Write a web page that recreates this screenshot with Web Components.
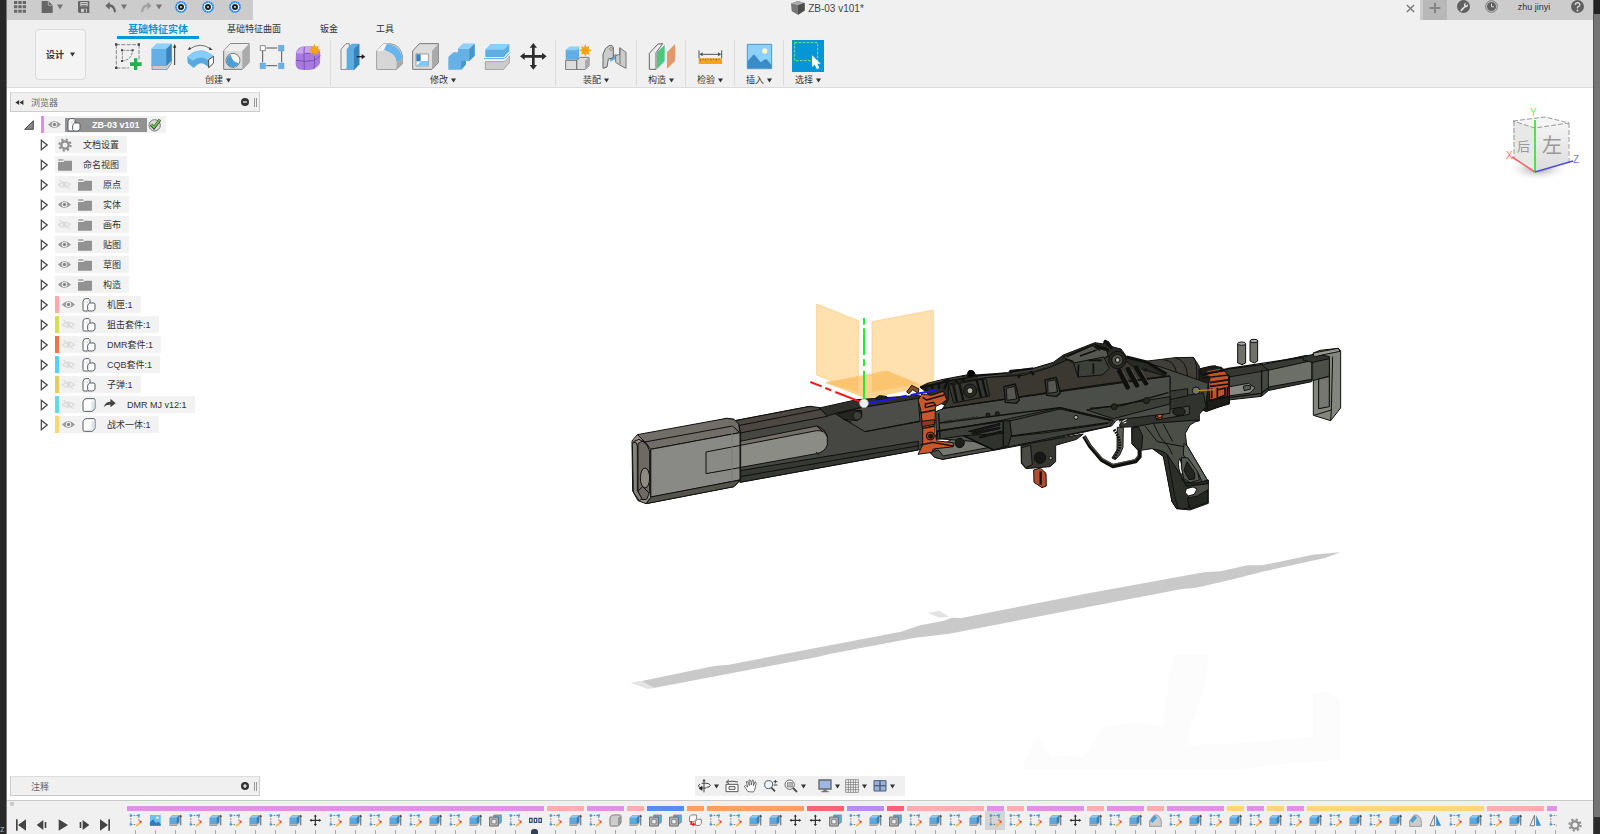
<!DOCTYPE html>
<html lang="zh-CN">
<head>
<meta charset="utf-8">
<title>ZB-03 v101*</title>
<style>
    html, body { height: 100%; }
    body {
        margin: 0;
        overflow: hidden;
        font-family: "Liberation Sans", "Noto Sans CJK SC", sans-serif;
        font-size: 9px;
        color: #333;
        background: #282828;
    }
</style>
</head>
<body>
<cad-app></cad-app>

<script>
const BASE = `
    *, :host { box-sizing: border-box; }
    button {
        display: flex; align-items: center; justify-content: center;
        margin: 0; padding: 0; border: 0; background: none;
        font: inherit; color: inherit; cursor: pointer;
    }
`;

const SUN = (x, y) => `<g transform="translate(${x} ${y})"><path fill="#f7a30c" d="M0-19L4-9 12-14 10-4 19 0 10 4 13 13 4 10 0 19-4 10-13 13-10 4-19 0-10-4-13-13-4-9Z"/></g>`;
const SKETCH = `<g fill="none" stroke="#555" stroke-width="2.5" stroke-dasharray="5 4"><path d="M6 5H31M6 5V33M6 34H22M32 8V22"/></g>
    <g fill="#3d9fe8"><path d="M2 1h7v7H2zM28 1h7v7h-7zM2 30h7v7H2z"/></g>
    <path d="M23 36L34 25 39 30 28 39 21 41Z" fill="#f6b73c"/><path d="M33 24L37 20 42 25 38 30Z" fill="#f04438"/>`;
const EXTRUDE = `<path d="M2 12L12 3H34L33 30 25 39H2Z" fill="#777"/><path d="M3 12L12 4H33V27L25 33H3Z" fill="#59a9e0"/><path d="M3 12L12 4H33L25 12Z" fill="#8ccdf7"/><path d="M25 12L33 4V27L25 33Z" fill="#3382bd"/><path d="M3 33H25L33 28V31L25 37H3Z" fill="#ccc"/><path d="M38 37V6" stroke="#333" stroke-width="2.5"/><path d="M34 9L38 2 42 9Z" fill="#333"/>`;
const COMBINE = `<path d="M15 3H40V27L30 34H15Z" fill="#5dabdf" stroke="#4b7d9e" stroke-width="2"/><path d="M2 10H30V39H2Z" fill="#bbb" stroke="#666" stroke-width="3"/><path d="M9 17H23V32H9Z" fill="#f0f0f0" stroke="#777" stroke-width="3"/>`;
const MOVE = `<path d="M40 0L51 14H44V36H66V29L80 40 66 51V44H44V66H51L40 80 29 66H36V44H14V51L0 40 14 29V36H36V14H29Z" fill="#2d2d2d"/>`;
const FILLET = `<path d="M2 40V22L15 5Q18 2 25 3Q38 8 40 26V40Z" fill="#ccc" stroke="#777" stroke-width="2"/><path d="M4 22L17 5 27 11 11 29Z" fill="#4c9cd6"/>`;
const COMP = `<g fill="#fff" stroke="#555b66" stroke-width="3"><path d="M3 10Q4 3 10 2H21Q25 4 24 9V33Q22 39 16 39H6Q2 39 3 34Z"/><path d="M17 23Q18 17 23 15H36Q40 17 39 21V33Q37 39 31 39H21Q17 38 17 34Z"/></g><path d="M5 12H15Q20 10 22 5M15 12V20" fill="none" stroke="#ccd0d6" stroke-width="2"/>`;
const GEAR = c => `<g fill="none" stroke="${c}"><circle cx="21" cy="21" r="11" stroke-width="7"/><circle cx="21" cy="21" r="17" stroke-width="6" stroke-dasharray="6.5 6.85"/></g>`;

// name: [viewBox, markup]
const ICONS = {
    apps: ['0 0 36 36', `<g fill="#666"><path d="M0 0h10v9H0zM13 0h10v9H13zM26 0h10v9H26zM0 13h10v9H0zM13 13h10v9H13zM26 13h10v9H26zM0 26h10v9H0zM13 26h10v9H13zM26 26h10v9H26z"/></g>`],
    file: ['0 0 36 36', `<path d="M2 0H22L35 13V36H2Z" fill="#666"/><path d="M22 0V13H35" fill="none" stroke="#ccc" stroke-width="2"/>`],
    save: ['0 0 36 36', `<path fill="#666" d="M2 0H34V36H4L0 32V2Z"/><path fill="#ccc" d="M7 3H29V16H7ZM9 23H27V34H9Z"/><path fill="#666" d="M10 7H26V9H10ZM10 12H26V14H10ZM18 25h6v9h-6z"/>`],
    undo: ['0 0 36 36', `<path d="M1 14L14 2V10Q31 10 33 34H27Q25 18 14 18V26Z" fill="#666"/>`],
    redo: ['0 0 36 36', `<path d="M35 14L22 2V10Q5 10 3 34H9Q11 18 22 18V26Z" fill="#a2a2a2"/>`],
    ring: ['0 0 36 36', `<circle cx="18" cy="18" r="15" fill="#e9f5ff" stroke="#1687ff" stroke-width="5" stroke-dasharray="6 1"/><circle cx="18" cy="18" r="9" fill="#222"/><circle cx="18" cy="18" r="3" fill="#ddd"/>`],
    caret: ['0 0 10 10', `<path d="M0 1H10L5 9Z" fill="currentColor"/>`],
    cubedoc: ['0 0 40 40', `<path d="M0 7L20 0 39 6V27L20 39 2 29Z" fill="#777"/><path d="M0 7L20 0 39 6 20 12Z" fill="#aaa"/><path d="M20 12L39 6V27L20 39Z" fill="#4d4d4d"/>`],
    close: ['0 0 10 10', `<path d="M1 1L9 9M9 1L1 9" stroke="#777" stroke-width="1.5"/>`],
    plus: ['0 0 36 36', `<path d="M18 2V34M2 18H34" stroke="#858585" stroke-width="6"/>`],
    wrench: ['0 0 40 40', `<circle cx="20" cy="20" r="20" fill="#606060"/><path d="M10 31L22 19Q19 10 29 8L25 14 28 17 34 12Q35 23 25 23L14 35Z" fill="#ddd"/>`],
    clock: ['0 0 40 40', `<circle cx="20" cy="20" r="18" fill="none" stroke="#777" stroke-width="3"/><circle cx="20" cy="20" r="14" fill="#606060"/><path d="M20 11V21H28" stroke="#ddd" stroke-width="3" fill="none"/>`],
    help: ['0 0 40 40', `<circle cx="20" cy="20" r="20" fill="#606060"/><path d="M13 15Q14 8 20 8Q28 9 27 16Q26 20 20 22V26" stroke="#ddd" stroke-width="4" fill="none"/><circle cx="20" cy="32" r="3" fill="#ddd"/>`],

    newsketch: ['0 0 81 81', `<g fill="none" stroke="#555" stroke-width="2"><path d="M3 5H72M4 5V74M72 5V50M4 75H42" stroke-dasharray="12 4"/><path d="M22 22H52Q52 50 22 54Z" stroke-dasharray="9 3"/></g><g fill="#444"><path d="M0 1h7v7H0zM68 1h7v7h-7zM0 71h7v7H0zM18 19h6v6h-6zM50 19h6v6h-6zM18 51h6v6h-6z"/></g><path d="M57 46H67V58H80V69H67V81H57V69H45V58H57Z" fill="#22b14c"/>`],
    extrude: ['0 0 81 81', `<path d="M3 66H45L61 50V61L48 80H3Z" fill="#ccc" stroke="#777" stroke-width="2"/><path d="M1 18L17 2H62V52L46 69H1Z" fill="#62b0e6"/><path d="M1 18L17 2H62L46 18Z" fill="#8dd0fb"/><path d="M46 18L62 2V52L46 69Z" fill="#3784bb"/><path d="M71 66V10" stroke="#333" stroke-width="3"/><path d="M66 14L71 2 76 14Z" fill="#333"/>`],
    revolve: ['0 0 81 81', `<path d="M8 18Q40-4 70 17" fill="none" stroke="#333" stroke-width="2"/><path d="M2 21L8 11 12 19ZM77 21L68 12 66 20Z" fill="#333"/><path d="M1 41Q40 4 80 40L68 48V74Q60 70 56 66Q40 52 20 75L2 60Z" fill="#5aa9de"/><path d="M1 41Q40 8 80 40L64 52Q42 34 17 53Z" fill="#86cdf9"/><path d="M65 50L80 40V60L65 74Z" fill="#fff" stroke="#444" stroke-width="3"/>`],
    hole: ['0 0 81 81', `<path d="M2 24L22 2H78V58L58 79H2Z" fill="#ddd" stroke="#777" stroke-width="3"/><path d="M3 24L22 3H77L58 24Z" fill="#eee"/><path d="M58 24L78 3V57L58 78Z" fill="#aaa"/><circle cx="30" cy="52" r="21" fill="#f4f4f4" stroke="#777" stroke-width="3"/><path d="M23 35A19 19 0 1 0 47 60Q28 58 23 35Z" fill="#4c9dd6"/>`],
    pattern: ['0 0 81 81', `<path d="M22 15H54M11 24V58M68 24V58M22 68H54" stroke="#555" stroke-width="3"/><path d="M4 8h15v15H4z" fill="#fff" stroke="#555" stroke-width="2"/><path d="M58 7h17v17H58zM3 60h17v17H3zM58 60h17v17H58z" fill="#68b4ea" stroke="#4a96c9"/>`],
    form: ['0 0 81 81', `<path d="M3 30Q4 20 17 12Q24 9 55 10Q72 14 76 30L75 60Q71 70 55 79Q30 84 10 78Q1 72 2 58Z" fill="#a77bde"/><path d="M3 30Q10 18 20 12Q45 7 60 14L55 28Q25 34 3 30Z" fill="#c9a6f3"/><path d="M28 12Q26 22 28 80M3 52Q30 58 58 52L76 38M58 28Q60 50 57 78M28 31H57" fill="none" stroke="#7b4fb8" stroke-width="3"/>${SUN(59, 21)}`],
    presspull: ['0 0 81 81', `<path d="M3 19L18 2H28V64L18 80H3Z" fill="#eee" stroke="#555" stroke-width="2"/><path d="M20 18L35 2H58V64L42 81H20Z" fill="#5dabdf"/><path d="M42 18L58 2V64L42 81Z" fill="#3583bb"/><path d="M50 41H68" stroke="#222" stroke-width="4"/><path d="M65 33L76 41 65 49Z" fill="#222"/>`],
    fillet: ['0 0 81 81', `<path d="M2 79V24L22 2H42Q75 5 80 42V62L61 80Z" fill="#d6d6d6" stroke="#777" stroke-width="2"/><path d="M2 24L22 2H40L24 24Z" fill="#f4f4f4"/><path d="M32 3Q70 5 80 46L62 58Q60 30 24 21Z" fill="#67b5ec"/><path d="M4 26L24 21Q58 30 61 58V78H4Z" fill="#d6d6d6"/><path d="M62 58L80 46V62L61 80Z" fill="#aaa"/>`],
    shell: ['0 0 81 81', `<path d="M2 24L22 2H80V58L60 79H2Z" fill="#ddd" stroke="#777" stroke-width="3"/><path d="M60 24L79 3V57L60 78Z" fill="#aaa"/><path d="M12 33H49V69H12Z" fill="#fff" stroke="#777" stroke-width="2"/><path d="M13 34H26V55H13Z" fill="#3784bb"/><path d="M14 68L27 54H48V68Z" fill="#7dc8f7"/>`],
    combine: ['0 0 81 81', `<path d="M1 42L16 28H30V18L45 2H80V38L64 54H54V64L40 80H1Z" fill="#65b0e4"/><path d="M30 18L45 2H80L64 18Z" fill="#90d2fc"/><path d="M64 18L80 2V38L64 54ZM40 54H54V64L40 80Z" fill="#4c95cb"/>`],
    split: ['0 0 81 81', `<path d="M4 20L21 3H76V25L60 43H4Z" fill="#5eaee2"/><path d="M4 20L21 3H76L60 20Z" fill="#8bd0fb"/><path d="M4 56H60L76 38V59L58 80H4Z" fill="#ccc" stroke="#888" stroke-width="2"/><path d="M2 47H62L79 28" fill="none" stroke="#fff" stroke-width="8"/><path d="M0 47H61L79 28" fill="none" stroke="#4aa5e1" stroke-width="3"/>`],
    move: ['0 0 81 81', MOVE],
    assemble: ['0 0 81 81', `<path d="M2 22L14 11H42V50H2Z" fill="#60aee4"/><path d="M2 22L14 11H46L35 22Z" fill="#8dd1fc"/><path d="M2 52H35V80H2ZM35 52L46 43H72V68L60 80H35Z" fill="#ddd" stroke="#777" stroke-width="3"/><path d="M60 53L72 43V68L60 80Z" fill="#aaa"/>${SUN(61, 22)}`],
    joint: ['0 0 81 81', `<path d="M25 42L45 32 52 44 28 56Z" fill="#61b0e7"/><path d="M6 76V34Q12 12 24 8Q36 5 37 15V44L22 48 18 72Z" fill="#ccc" stroke="#666" stroke-width="3"/><path d="M44 38L56 34V14L75 28V76L56 66 44 58Z" fill="#ccc" stroke="#777" stroke-width="3"/><path d="M57 15V64" stroke="#777" stroke-width="3"/><circle cx="30" cy="18" r="4" fill="#fff" stroke="#555" stroke-width="2"/>`],
    construct: ['0 0 81 81', `<path d="M4 31L30 3 44 2 24 29V79H4Z" fill="#eee" stroke="#666" stroke-width="3"/><path d="M27 28L50 5V54L27 78Z" fill="#4fc57d"/><path d="M57 28L81 3V54L57 77Z" fill="#e59768"/>`],
    measure: ['0 0 81 81', `<path d="M6 22V46M74 22V46M12 34H68" stroke="#555" stroke-width="3"/><path d="M7 34L17 28V40ZM73 34L63 28V40Z" fill="#555"/><path d="M5 46H75V63H5Z" fill="#f9a31a"/><path d="M10 46V54M18 46V51M26 46V54M34 46V51M42 46V54M50 46V51M58 46V54M66 46V51" stroke="#835b19" stroke-width="2"/>`],
    picture: ['0 0 81 81', `<path d="M4 4H77V77H4Z" fill="#8bd1fb" stroke="#4d98ce" stroke-width="3"/><circle cx="56" cy="24" r="8" fill="#fff8c2"/><path d="M5 55L21 36Q24 34 28 38L44 58 55 50Q61 46 65 52L76 66V76H5Z" fill="#398cc5"/>`],
    select: ['0 0 96 96', `<path d="M0 0H96V96H0Z" fill="#0696d7"/><path d="M8 8H77V62H8Z" fill="none" stroke="#7fe08c" stroke-width="3" stroke-dasharray="8 4"/><path d="M60 46V81L68 74 75 88 82 84 76 71H86Z" fill="#fff"/>`],

    sketch: ['0 0 42 42', SKETCH], ext: ['0 0 42 42', EXTRUDE], comb: ['0 0 42 42', COMBINE], cham: ['0 0 42 42', FILLET],
    mv: ['-4 -4 90 90', MOVE],
    img: ['0 0 42 42', `<path d="M3 3H38V38H3Z" fill="#72c0f2"/><path d="M3 27L13 17 23 29 30 24 38 32V38H3Z" fill="#277fbd"/><circle cx="27" cy="12" r="4" fill="#fff3b1"/>`],
    dots: ['0 0 42 42', `<g fill="#fff" stroke="#334d7a" stroke-width="4"><path d="M2 14h8v13H2zM17 14h8v13H17zM32 14h8v13H32z"/></g>`],
    body: ['0 0 42 42', `<path d="M3 13Q5 4 14 3H35Q39 4 39 8V28Q34 38 28 39H6Q2 38 3 34Z" fill="#ccc" stroke="#666" stroke-width="2.5"/><path d="M29 13L39 5V28L29 38Z" fill="#999"/>`],
    insert: ['0 0 42 42', `<g fill="#fff" stroke="#777" stroke-width="3"><path d="M2 8L9 3H24V16L16 25H2Z"/><path d="M21 23L28 17H40V30L34 37H21Z"/></g><path d="M7 23V33H14" fill="none" stroke="#d22" stroke-width="5"/><path d="M12 27L21 33 12 40Z" fill="#e11"/>`],
    mirror: ['0 0 42 42', `<path d="M18 4V38H3Z" fill="#eee" stroke="#777" stroke-width="3"/><path d="M23 4V38H39Z" fill="#3c91cd"/>`],

    first: ['0 0 36 36', `<path d="M3 1h5v34H3zM33 1V35L9 18Z" fill="#444"/>`],
    prev: ['0 0 36 36', `<path d="M22 3V33L2 18ZM26 9h5v18h-5z" fill="#444"/>`],
    play: ['0 0 36 36', `<path d="M5 1L33 18 5 35Z" fill="#444"/>`],
    next: ['0 0 36 36', `<path d="M14 3V33L34 18ZM5 9h5v18H5z" fill="#444"/>`],
    last: ['0 0 36 36', `<path d="M28 1h5v34h-5zM3 1V35L27 18Z" fill="#444"/>`],
    gear: ['0 0 42 42', GEAR('#8f8f8f')],

    eye: ['0 0 42 42', `<path d="M0 21Q20-2 42 21Q20 44 0 21Z" fill="#999"/><circle cx="21" cy="21" r="9" fill="#eee"/><circle cx="21" cy="21" r="5.5" fill="#888"/>`],
    eyeoff: ['0 0 42 42', `<path d="M2 22Q20 5 40 21Q20 38 2 22ZM5 6L36 35" fill="none" stroke="#dadada" stroke-width="4"/><circle cx="21" cy="21" r="6" fill="#dadada"/>`],
    folder: ['0 0 42 42', `<path d="M0 12H16L20 8H42V38H0Z" fill="#929292"/><path d="M1 4H16V8H1Z" fill="#929292"/>`],
    comp: ['0 0 42 42', COMP],
    cube: ['0 0 42 42', `<path d="M3 11Q6 3 12 2H36Q40 3 39 8V31Q36 37 30 40H7Q2 40 3 35Z" fill="#fff" stroke="#555b66" stroke-width="3"/><path d="M5 12H28V38L38 31V7L28 12Z" fill="#dfe3ea"/>`],
    link: ['0 0 42 42', `<path d="M2 32Q8 15 24 15V6L41 20 24 33V25Q11 24 2 32Z" fill="#444"/>`],
    check: ['0 0 42 42', `<circle cx="20" cy="22" r="17" fill="#ddd" stroke="#777" stroke-width="3"/><path d="M9 20L18 29 36 5" fill="none" stroke="#333" stroke-width="9"/><path d="M9 19L18 28 36 5" fill="none" stroke="#6ec04b" stroke-width="6"/>`],
    tri: ['0 0 30 40', `<path d="M6 4V36L26 20Z" fill="#f4f4f4" stroke="#444" stroke-width="4"/>`],
    open: ['0 0 30 30', `<path d="M28 2V28H2Z" fill="#888" stroke="#333" stroke-width="2.5"/>`],
    rewind: ['0 0 30 18', `<path d="M14 1V17L1 9ZM28 1V17L15 9Z" fill="#333"/>`],
    minus: ['0 0 24 24', `<circle cx="12" cy="12" r="12" fill="#333"/><path d="M6 12H18" stroke="#fff" stroke-width="3.5"/>`],
    add: ['0 0 24 24', `<circle cx="12" cy="12" r="12" fill="#333"/><path d="M6 12H18M12 6V18" stroke="#fff" stroke-width="3.5"/>`],

    orbit: ['0 0 42 42', `<path d="M21 2V40" stroke="#444" stroke-width="3"/><path d="M16 7L21 0 26 7Z" fill="#444"/><path d="M9 15Q-2 22 13 27H28M14 13Q40 11 40 20Q38 25 29 25" fill="none" stroke="#444" stroke-width="3"/><path d="M16 20L5 28 16 36Z" fill="#222"/>`],
    look: ['0 0 42 42', `<path d="M3 16H39V38H3ZM12 23H30V31H12Z" fill="#fff" stroke="#555" stroke-width="3"/><path d="M5 9Q20 4 39 9M12 2L4 9 12 14" fill="none" stroke="#555" stroke-width="3"/>`],
    pan: ['0 0 42 42', `<path d="M12 38Q5 28 1 22Q5 17 11 24L7 8Q12 4 16 20L15 3Q21 0 22 18L25 3Q31 2 28 20L34 8Q39 10 34 24Q33 35 28 39Z" fill="#fff" stroke="#555" stroke-width="2.5"/>`],
    zoom: ['0 0 42 42', `<circle cx="14" cy="17" r="12" fill="#eef6fb" stroke="#555" stroke-width="3"/><path d="M22 26L33 37" stroke="#444" stroke-width="5"/><path d="M34 3V13M29 8H40M29 18H40" stroke="#444" stroke-width="3"/>`],
    fit: ['0 0 42 42', `<circle cx="17" cy="17" r="14" fill="#fff" stroke="#666" stroke-width="3"/><path d="M10 11H25V24H10Z" fill="#bbb" stroke="#666" stroke-width="2"/><path d="M27 27L39 39" stroke="#555" stroke-width="6"/>`],
    display: ['0 0 42 42', `<path d="M3 3H39V30H3Z" fill="#9bb9e4" stroke="#666" stroke-width="4"/><path d="M16 30H26V36H32V40H10V36H16Z" fill="#777"/>`],
    grid: ['0 0 42 42', `<path d="M2 2H40V40H2ZM10 2V40M17 2V40M25 2V40M32 2V40M2 10H40M2 17H40M2 25H40M2 32H40" fill="#fff" stroke="#666" stroke-width="2"/>`],
    views: ['0 0 42 42', `<path d="M3 5H39V36H3Z" fill="#9ab3db" stroke="#4a5a77" stroke-width="3"/><path d="M21 5V36M3 20H39" stroke="#4a5a77" stroke-width="4"/>`]
};

class CadIcon extends HTMLElement {
    constructor() {
        super();
        this.attachShadow({ mode: 'open' });
    }

    connectedCallback() {
        const [box, art] = ICONS[this.getAttribute('name')];
        const size = this.getAttribute('size') || 14;
        this.shadowRoot.innerHTML = `
            <style>
                :host { display: inline-flex; flex: none; width: ${size}px; height: ${size}px; }
                svg { width: 100%; height: 100%; }
            </style>
            <svg viewBox="${box}" aria-hidden="true">${art}</svg>
        `;
    }
}
customElements.define('cad-icon', CadIcon);

const icon = (name, size) => `<cad-icon name="${name}" size="${size}"></cad-icon>`;

class TitleBar extends HTMLElement {
    constructor() {
        super();
        this.attachShadow({ mode: 'open' });
        this.shadowRoot.innerHTML = `
            <style>
                ${BASE}
                :host { display: flex; height: 20px; background: #f0f0f0; }
                .quick, .account { display: flex; align-items: flex-start; background: #ccc; }
                button { height: 13px; color: #777; }
                .quick { width: 246px; padding-left: 7px; }
                .quick button { flex: none; margin-right: 15px; gap: 4px; }
                .quick .menu { margin-right: 13px; }
                .tab { flex: 1; display: flex; align-items: center; gap: 4px; height: 16px; padding-right: 5px; font-size: 10px; color: #444; }
                .doc { flex: 1; display: flex; justify-content: center; align-items: center; gap: 3px; }
                .account { width: 173px; padding-left: 3px; }
                .account button { width: 28px; }
                .account .new { width: 24px; height: 20px; padding-bottom: 4px; background: #b8b8b8; margin-right: 2px; }
                .account .name { width: 58px; height: 14px; color: #333; }
            </style>
            <div class="quick">
                <button aria-label="应用">${icon('apps', 12)}</button>
                <button aria-label="文件">${icon('file', 12)}${icon('caret', 6)}</button>
                <button aria-label="保存">${icon('save', 12)}</button>
                <button aria-label="撤消" class="menu">${icon('undo', 12)}${icon('caret', 6)}</button>
                <button aria-label="重做" class="menu">${icon('redo', 12)}${icon('caret', 6)}</button>
                <button aria-label="插件 1">${icon('ring', 12)}</button>
                <button aria-label="插件 2">${icon('ring', 12)}</button>
                <button aria-label="插件 3">${icon('ring', 12)}</button>
            </div>
            <div class="tab">
                <div class="doc">${icon('cubedoc', 14)}<span>ZB-03 v101*</span></div>
                <button aria-label="关闭">${icon('close', 9)}</button>
            </div>
            <div class="account">
                <button aria-label="新建" class="new">${icon('plus', 12)}</button>
                <button aria-label="扩展">${icon('wrench', 13)}</button>
                <button aria-label="作业状态">${icon('clock', 13)}</button>
                <button class="name">zhu jinyi</button>
                <button aria-label="帮助">${icon('help', 13)}</button>
            </div>
        `;
    }
}
customElements.define('title-bar', TitleBar);

class ToolGroup extends HTMLElement {
    constructor() {
        super();
        this.attachShadow({ mode: 'open' });
    }

    connectedCallback() {
        const tools = this.dataset.tools.split(' ');
        this.shadowRoot.innerHTML = `
            <style>
                ${BASE}
                :host {
                    display: flex; flex-direction: column; align-items: center; gap: 2px;
                    padding: 0 ${tools.length > 1 ? 4 : 6}px; border-right: 1px solid #dcdcdc;
                }
                :host(:last-of-type) { border-right: 0; }
                .tools { display: flex; }
                .tools button { width: 36px; height: 32px; }
                .label { height: 12px; gap: 3px; line-height: 12px; }
            </style>
            <div class="tools">
                ${tools.map(t => `<button aria-label="${t}">${icon(t, t === 'select' ? 32 : 27)}</button>`).join('')}
            </div>
            <button class="label"><slot></slot>${icon('caret', 5)}</button>
        `;
    }
}
customElements.define('tool-group', ToolGroup);

class ToolRibbon extends HTMLElement {
    constructor() {
        super();
        this.attachShadow({ mode: 'open' });
        this.shadowRoot.innerHTML = `
            <style>
                ${BASE}
                :host { display: flex; height: 68px; background: #f0f0f0; border-bottom: 1px solid #dcdcdc; }
                .space {
                    width: 51px; height: 51px; margin: 9px 20px 0 28px; gap: 6px;
                    border: 1px solid #dadada; border-radius: 4px; background: #f4f4f4; font-weight: bold;
                }
                nav { display: flex; height: 20px; padding: 1px 0 0 11px; }
                nav button { height: 18px; border-bottom: 3px solid transparent; }
                nav .on { width: 82px; color: #0696d7; font-size: 10px; font-weight: bold; border-color: #0696d7; }
                nav .face { width: 110px; }
                nav .metal { width: 40px; }
                nav .tools { width: 72px; }
                .groups { display: flex; height: 46px; }
            </style>
            <button class="space">设计${icon('caret', 5)}</button>
            <div>
                <nav>
                    <button class="on">基础特征实体</button>
                    <button class="face">基础特征曲面</button>
                    <button class="metal">钣金</button>
                    <button class="tools">工具</button>
                </nav>
                <div class="groups">
                    <tool-group data-tools="newsketch extrude revolve hole pattern form">创建</tool-group>
                    <tool-group data-tools="presspull fillet shell combine split move">修改</tool-group>
                    <tool-group data-tools="assemble joint">装配</tool-group>
                    <tool-group data-tools="construct">构造</tool-group>
                    <tool-group data-tools="measure">检验</tool-group>
                    <tool-group data-tools="picture">插入</tool-group>
                    <tool-group data-tools="select">选择</tool-group>
                </div>
            </div>
        `;
    }
}
customElements.define('tool-ribbon', ToolRibbon);

class PanelBar extends HTMLElement {
    constructor() {
        super();
        this.attachShadow({ mode: 'open' });
    }

    connectedCallback() {
        const back = this.hasAttribute('back');
        this.shadowRoot.innerHTML = `
            <style>
                ${BASE}
                :host {
                    display: flex; align-items: center; width: 250px; height: 20px; padding: 0 2px 0 4px;
                    background: #f0f0f0; border: 1px solid #ccc; border-top-color: #ddd; color: #666;
                }
                .lead { width: 10px; margin-right: 6px; }
                .title { flex: 1; }
                .grip { width: 3px; height: 9px; margin-left: 5px; border: solid #999; border-width: 0 1px; }
            </style>
            <span class="lead">${back ? `<button aria-label="折叠">${icon('rewind', 9)}</button>` : ''}</span>
            <span class="title"><slot></slot></span>
            <button aria-label="切换">${icon(back ? 'minus' : 'add', 8)}</button>
            <span class="grip"></span>
        `;
    }
}
customElements.define('panel-bar', PanelBar);

class TreeRow extends HTMLElement {
    constructor() {
        super();
        this.attachShadow({ mode: 'open' });
    }

    connectedCallback() {
        const { kind, bar, eye, link } = this.dataset;
        const root = this.hasAttribute('root');
        this.shadowRoot.innerHTML = `
            <style>
                ${BASE}
                :host { display: flex; align-items: center; height: 17px; padding-left: 29px; }
                :host([root]) { padding-left: 14px; }
                .twist { width: 10px; margin-right: 6px; }
                :host([root]) .twist { margin-right: 7px; }
                .body { display: flex; align-items: center; height: 17px; padding-right: 8px; background: #f2f2f2; }
                .bar { width: 4px; height: 17px; background: ${bar}; }
                :host([root]) .bar { width: 3px; }
                .eye { margin: 0 0 0 3px; width: 13px; }
                .item { display: flex; align-items: center; height: 17px; padding-left: 7px; gap: 11px; color: #333; }
                .item.solo { padding-left: 3px; }
                :host([root]) .body { padding-right: 4px; gap: 1px; }
                :host([root]) .item { height: 14px; margin-left: 3px; padding: 0 7px 0 2px; background: #929292; color: #fff; font-weight: bold; }
                .link { margin: 0 0 0 -4px; }
            </style>
            <button class="twist" aria-label="展开">${icon(root ? 'open' : 'tri', root ? 10 : 12)}</button>
            <div class="body">
                ${bar ? '<span class="bar"></span>' : ''}
                ${eye ? `<button class="eye" aria-label="可见性">${icon(eye === 'on' ? 'eye' : 'eyeoff', 13)}</button>` : ''}
                <span class="item ${eye ? '' : 'solo'}">${icon(kind, 14)}${link ? `<span class="link">${icon('link', 13)}</span>` : ''}<slot></slot></span>
                ${root ? icon('check', 14) : ''}
            </div>
        `;
    }
}
customElements.define('tree-row', TreeRow);

class BrowserTree extends HTMLElement {
    constructor() {
        super();
        this.attachShadow({ mode: 'open' });
        this.shadowRoot.innerHTML = `
            <style>
                :host { display: block; }
                .rows { display: flex; flex-direction: column; gap: 3px; padding-top: 4px; }
            </style>
            <panel-bar back>浏览器</panel-bar>
            <div class="rows">
                <tree-row root data-kind="comp" data-bar="#dd8ee8" data-eye="on">ZB-03 v101</tree-row>
                <tree-row data-kind="gear">文档设置</tree-row>
                <tree-row data-kind="folder">命名视图</tree-row>
                <tree-row data-kind="folder" data-eye="off">原点</tree-row>
                <tree-row data-kind="folder" data-eye="on">实体</tree-row>
                <tree-row data-kind="folder" data-eye="off">画布</tree-row>
                <tree-row data-kind="folder" data-eye="on">贴图</tree-row>
                <tree-row data-kind="folder" data-eye="on">草图</tree-row>
                <tree-row data-kind="folder" data-eye="on">构造</tree-row>
                <tree-row data-kind="comp" data-bar="#ffa9ae" data-eye="on">机匣:1</tree-row>
                <tree-row data-kind="comp" data-bar="#d7dd51" data-eye="off">狙击套件:1</tree-row>
                <tree-row data-kind="comp" data-bar="#ec7550" data-eye="off">DMR套件:1</tree-row>
                <tree-row data-kind="comp" data-bar="#50d5f8" data-eye="off">CQB套件:1</tree-row>
                <tree-row data-kind="comp" data-bar="#e8ca60" data-eye="off">子弹:1</tree-row>
                <tree-row data-kind="cube" data-bar="#60dde0" data-eye="off" data-link="1">DMR MJ v12:1</tree-row>
                <tree-row data-kind="cube" data-bar="#ffd576" data-eye="on">战术一体:1</tree-row>
            </div>
        `;
    }
}
customElements.define('browser-tree', BrowserTree);

class ViewCube extends HTMLElement {
    constructor() {
        super();
        this.attachShadow({ mode: 'open' });
        this.shadowRoot.innerHTML = `
            <style>
                :host { display: block; width: 84px; height: 84px; }
                svg { width: 100%; height: 100%; font-family: "Liberation Sans", "Noto Sans CJK SC", sans-serif; }
            </style>
            <svg viewBox="1500 104 84 84">
                <defs>
                    <radialGradient id="s"><stop offset="0" stop-color="#999"/><stop offset="1" stop-color="#fff" stop-opacity="0"/></radialGradient>
                    <linearGradient id="f" x2="0" y2="1"><stop offset="0" stop-color="#f4f4f4"/><stop offset="1" stop-color="#dcdcdc"/></linearGradient>
                </defs>
                <ellipse cx="1538" cy="169" rx="31" ry="12" fill="url(#s)"/>
                <path d="M1513 121L1535 128V172L1514 158Z" fill="#e8e8e8"/>
                <path d="M1535 128L1569 123 1568 162 1535 172Z" fill="url(#f)"/>
                <path d="M1513 121L1545 117 1569 123 1535 128Z" fill="#f5f5f5"/>
                <path d="M1513 121L1545 117 1569 123 1535 128ZM1514 121V158M1569 123V162" fill="none" stroke="#999" stroke-dasharray="5 2"/>
                <text x="1517" y="151" font-size="13" fill="#999">后</text>
                <text x="1542" y="153" font-size="20" fill="#999">左</text>
                <path d="M1535 172L1512 157" stroke="#f06464" stroke-width="1.5"/>
                <path d="M1535 172V120" stroke="#2bd52b" stroke-width="1.5"/>
                <path d="M1535 172L1573 161" stroke="#4b4be6" stroke-width="1.5"/>
                <text x="1506" y="159" font-size="10" fill="#ff7070">X</text>
                <text x="1530" y="116" font-size="10" fill="#66ef66">Y</text>
                <text x="1573" y="163" font-size="10" fill="#7070ff">Z</text>
            </svg>
        `;
    }
}
customElements.define('view-cube', ViewCube);

class NavBar extends HTMLElement {
    constructor() {
        super();
        this.attachShadow({ mode: 'open' });
        const tools = [['orbit', 1], ['look'], ['pan'], ['zoom'], ['fit', 1], ['display', 1], ['grid', 1], ['views', 1]];
        this.shadowRoot.innerHTML = `
            <style>
                ${BASE}
                :host { display: flex; align-items: center; height: 20px; width: 210px; padding: 0 10px 0 2px; background: #f0f0f0; justify-content: space-between; }
                button { gap: 3px; }
                button:nth-of-type(6) { margin-left: 6px; }
            </style>
            ${tools.map(([t, c]) => `<button aria-label="${t}">${icon(t, 14)}${c ? icon('caret', 5) : ''}</button>`).join('')}
        `;
    }
}
customElements.define('nav-bar', NavBar);

class ModelView extends HTMLElement {
    constructor() {
        super();
        this.attachShadow({ mode: 'open' });
        this.shadowRoot.innerHTML = `
            <style>
                :host { display: block; }
                svg { display: block; width: 100%; height: 100%; }
            </style>
            <svg viewBox="7 88 1586 712" role="img" aria-label="模型">
                <!-- ground shadow and faint reflection -->
                <g transform="translate(610 530) scale(.4847 .3333)">
                    <path fill="#fcfcfc" d="M1165 375H1237L1225 480 1195 600 1190 645 1300 640 1450 620V490L1480 485 1506 510V690L1400 700 1300 718H850L880 612 910 680 980 675 1020 590 1090 575 1140 590 1150 470Z"/>
                    <path fill="#c9c9c9" d="M58 455L215 408 245 404 600 305 640 286 690 272 705 263 725 264 990 189 1225 127 1260 124 1315 106 1345 106 1450 74 1507 67 1475 84 1350 124 1285 148 1210 173 1180 177 700 311 630 323 450 373 430 380 90 474Z"/>
                    <path fill="#e3e3e3" d="M42 458L65 452 92 474 78 477ZM655 248L680 243 700 260 680 263Z"/>
                </g>

                <!-- origin planes -->
                <g transform="translate(610 290) scale(.3333)" stroke="#f8c97d" stroke-width="2">
                    <path fill="#ffe0ae" d="M620 42L745 92V305L620 255Z"/>
                    <path fill="#ffe0ae" d="M786 95L970 60V290L786 306Z"/>
                    <path fill="#ffd38d" d="M648 278L830 243 945 290 770 325Z"/>
                    <path fill="#fbc46f" d="M648 278L745 260V305ZM786 252L830 243 925 282 786 306Z"/>
                </g>

                <!-- stock, buffer tube and grip -->
                <g transform="translate(1120 320) scale(.3333)" stroke="#10100f" stroke-width="3" stroke-linejoin="round">
                    <g fill="#70726a"><path d="M353 72V129L366 134 377 129V72Z"/><path d="M390 64V123L403 129 413 123V64Z"/></g>
                    <g fill="#aaa"><ellipse cx="365" cy="71" rx="12" ry="5"/><ellipse cx="402" cy="63" rx="12" ry="5"/></g>
                    <path fill="#383a36" d="M310 148L430 133 560 106 580 112 580 128 445 156Z"/>
                    <path fill="#6c6e68" d="M440 152L575 122V180L440 204Z"/>
                    <path fill="#343633" d="M440 202L575 178V185L443 212Z"/>
                    <path fill="#464843" d="M308 165L425 145 445 150V212L425 229 325 240Z"/>
                    <path fill="#353631" d="M310 149L425 134 445 150 425 154 315 173Z"/>
                    <path fill="none" stroke-width="4" d="M320 146L575 108M330 232L425 220 443 205M425 150V228"/>
                    <path fill="#878983" d="M318 202L385 190 405 203 390 219 325 228Z"/>
                    <path fill="#5b5d57" d="M370 199Q380 193 392 198V207L373 212Z"/>
                    <path fill="#83857f" d="M580 178V286L632 302 662 264V92L655 85 600 91 580 99V112L628 117V258L596 266V177Z"/>
                    <path fill="#757770" d="M596 177L628 170V260L596 266Z"/>
                    <path fill="#31332f" d="M550 110L580 103 628 109V118L582 128 550 121Z"/>
                    <path fill="#4c4e48" d="M578 127L628 116V168L578 182Z"/>
                    <path fill="#999b92" d="M580 99L655 85 660 94 606 105 582 111Z"/>
                    <path fill="none" d="M638 110L634 270 582 286M634 270L632 302"/>
                    <path fill="#413f3a" d="M75 124L165 113 220 112 238 139 238 185 120 155Z"/>
                    <path fill="none" d="M130 119Q165 121 170 162M165 113Q200 120 203 170M220 112Q233 125 230 177"/>
                    <path fill="#1f1f1d" d="M237 148L285 137 313 152 328 168V250L258 275 238 263Z"/>
                    <path fill="#c4532c" d="M262 158L310 150 325 165 328 246 278 257 269 235 266 190 270 176Z"/>
                    <path fill="#1c1c19" d="M240 146L275 138 305 142 314 152 262 160 244 166ZM262 242L328 228V252L262 270Z"/>
                    <path fill="none" stroke-width="5" d="M245 165L313 151M248 174L325 165M269 188L328 179M270 199L326 192M272 240L326 231M292 203V234M292 210L315 204V226L292 235M275 205V235M322 200V230"/>
                    <path fill="none" stroke="#c4532c" stroke-width="3" d="M262 155L300 148M262 166L312 157"/>
                    <path fill="#474943" d="M0 110L70 126 120 140 265 190 262 215 255 270 130 294 0 320Z"/>
                    <path fill="#31332e" d="M0 260L250 218 258 260 238 283V303L95 318 0 322Z"/>
                    <path fill="#4b4d47" d="M35 322L100 310 235 300 210 315 196 340 200 375 265 485V550L210 570 170 566 156 545 130 400 96 386 55 392 36 372Z"/>
                    <path fill="#2c2e29" d="M36 325L55 320 68 348 65 385 53 389 36 371ZM100 388Q130 390 143 405L188 475 207 500 205 566 170 566 156 545 130 410Z"/>
                    <path fill="#62655e" d="M192 370L203 380 265 485 249 493 235 460 190 405Z"/>
                    <path fill="#fff" d="M180 415Q170 430 181 460L190 465 185 435ZM199 506L219 501 231 507 223 523 205 528 196 518Z"/>
                    <path fill="#54574f" d="M185 412L204 414 233 456 238 480 210 488 191 475 184 442Z"/>
                    <path fill="#232520" d="M201 425L224 459V477L207 479 192 451ZM185 475L193 487 229 489 265 480V491L200 499ZM202 535L232 528 263 510V548L210 567Z"/>
                    <path fill="none" d="M75 318L112 365 192 380M130 312L158 365M100 310L120 350 145 380 158 404M142 404L164 530 175 565"/>
                    <path fill="#373934" d="M105 220L203 206V228L109 247Z"/>
                    <circle cx="228" cy="212" r="11" fill="#777970"/>
                    <path fill="none" stroke="#c98a22" stroke-width="4" d="M232 212L285 209"/>
                    <path fill="#494b45" d="M102 276L208 258V283L110 300Z"/>
                    <ellipse cx="177" cy="275" rx="19" ry="12" fill="#232520"/>
                    <path fill="#bd5533" d="M108 277L127 268 132 277 123 299 108 294Z"/>
                    <circle cx="119" cy="285" r="8" fill="#d96536"/>
                    <circle cx="80" cy="242" r="10" fill="#24261f"/>
                </g>

                <!-- barrel shroud and muzzle -->
                <g transform="translate(610 290) scale(.3333)" stroke="#10100f" stroke-width="3" stroke-linejoin="round">
                    <path fill="#464743" d="M374 392L600 349 635 357 945 318 945 476 390 577Z"/>
                    <path fill="#4c4741" d="M376 392L600 349 630 353 652 379 390 429Z"/>
                    <path fill="none" d="M385 407L633 358"/>
                    <path fill="#2e2f2b" d="M628 354L740 329 928 316V330L760 351 678 370 652 378Z"/>
                    <path fill="#363833" d="M390 542L925 454V480L390 577Z"/>
                    <path fill="none" d="M390 560L928 467"/>
                    <path fill="#4c4d49" d="M675 371L755 353 925 325 930 395 765 425Z"/>
                    <path fill="#25261f" d="M682 373L725 360 755 362V380L740 392 702 388Z"/>
                    <ellipse cx="742" cy="377" rx="13" ry="13" fill="#3d3e38"/>
                    <path fill="none" d="M765 425L930 393M700 388L725 397"/>
                    <path fill="#746f67" d="M390 454L620 408 636 423 392 468Z"/>
                    <path fill="#8b8c86" d="M288 486L620 422Q645 420 652 441V465Q644 486 620 491L288 551Z"/>
                    <path fill="none" d="M620 408Q645 414 652 441M618 486L628 495"/>
                    <path fill="#858681" d="M105 456L350 385 372 388 386 402 392 428V570L372 590 108 641Z"/>
                    <path fill="#716d67" d="M82 434L350 385 372 388 386 402 390 428 122 478 105 456Z"/>
                    <path fill="#898a85" d="M122 478L390 428V570L122 622Z"/>
                    <path fill="#55544c" d="M122 621L390 570 372 590 108 641Z"/>
                    <path fill="#969089" d="M66 453L82 434 105 456 122 478V622L108 641 84 632 68 603Z"/>
                    <path fill="#6d6a63" d="M84 461L99 452 112 468 119 483V607L110 628 96 629 84 603Z"/>
                    <path fill="#83847e" d="M67 460L77 456 82 468V602L96 627 88 632 70 606Z"/>
                    <ellipse cx="105" cy="564" rx="14" ry="30" fill="#8e8981"/>
                    <path fill="none" d="M105 456L368 408 387 426M288 486L392 466M288 486V551M288 551L390 533M70 455L87 448 104 458M84 603L98 590 118 610"/>
                    <path fill="none" stroke="#797b75" d="M366 410V574"/>
                    <path fill="#20211d" d="M797 324L808 317 830 319 831 328 800 331Z"/>
                </g>

                <!-- receiver, rail, trigger -->
                <g transform="translate(900 320) scale(.3333)" stroke="#10100f" stroke-width="3" stroke-linejoin="round">
                    <path fill="#74766f" d="M90 397L175 346 245 374 285 385 280 390 128 418 104 412Z"/>
                    <path fill="#4c4e48" d="M90 397L115 390 130 408 280 380 280 391 128 418 104 412Z"/>
                    <path fill="#282a25" d="M60 201L82 190 130 178 200 165 209 152 223 157 228 170 325 158 330 151 400 145 460 127 490 105 585 68 610 72 614 61 626 65 635 80 663 87 680 110 745 129 800 160 760 168 690 142 600 170 150 262 112 246Z"/>
                    <path fill="#3b3831" d="M145 192L265 172 370 166 445 144 520 112 660 110 700 140 810 172V205L640 230 125 270 145 240Z"/>
                    <path fill="#4b4d48" d="M107 275L135 264 810 168V280L650 300 635 318 440 361 282 391 230 365 110 356Z"/>
                    <path fill="#3e403b" d="M112 335L310 300 480 263 640 301 630 318 280 390 190 347 112 358Z"/>
                    <path fill="#30322d" d="M310 303L330 302 335 342 325 377 280 390 192 347 308 340Z"/>
                    <path fill="#474a44" d="M330 303L480 267 632 302 625 310 440 338 335 349Z"/>
                    <path fill="#3b3d37" d="M560 270L810 230V252L690 283 640 296Z"/>
                    <path fill="none" stroke-width="4" d="M120 309L480 263 635 300M110 333L310 303M310 303V380M335 348L625 308M116 280L120 355M190 347L280 389M570 265L665 257 805 218M130 265L630 190 810 168"/>
                    <path fill="#1d1f1b" d="M238 350L304 333V338L240 354ZM215 340L300 321V326L222 343ZM205 334L300 310V315L220 336Z"/>
                    <!-- ribbed block -->
                    <path fill="#363731" d="M146 196L258 176 269 228 161 249Z"/>
                    <path fill="none" stroke-width="7" d="M160 196L171 245M178 192L190 242M230 180L244 233M247 178L260 230"/>
                    <circle cx="210" cy="212" r="20" fill="#272923"/>
                    <circle cx="210" cy="212" r="9" fill="#adada3"/>
                    <!-- windows -->
                    <path fill="#3b3d36" stroke-width="4" d="M312 200L346 192 358 240 349 250 316 247Z"/>
                    <path fill="#565850" d="M319 205L344 199 350 237 321 241Z"/>
                    <path fill="#3b3d36" stroke-width="4" d="M435 180L469 172 481 219 470 229 440 226Z"/>
                    <path fill="#565850" d="M443 184L467 179 472 216 444 220Z"/>
                    <!-- rail teeth -->
                    <path fill="none" stroke-width="7" d="M62 204L135 184 225 167 320 160M78 195V212M97 190V208M117 186V207M144 182L132 208M160 174L171 187M190 166V184M330 156L400 145M390 152L402 165M355 174L361 163"/>
                    <path fill="none" stroke="#5b5d55" stroke-width="2" d="M85 192L128 182M150 178L200 170M232 172L320 163M335 160L400 150 455 134"/>
                    <circle cx="213" cy="161" r="10"/>
                    <!-- rear sight -->
                    <path fill="#555750" d="M490 111L585 73 618 84 624 107 605 119 522 130Z"/>
                    <path fill="#3d3f39" d="M521 129L612 111 628 146 606 165 534 171Z"/>
                    <path fill="none" stroke-width="5" d="M500 110L578 76 600 91M540 108L590 90M580 130V163M536 134L534 171M566 121H605M496 116L521 125"/>
                    <path fill="none" stroke-width="9" d="M585 78L626 91M613 62L637 85M680 111L740 126 800 163"/>
                    <circle cx="652" cy="120" r="26" fill="#262822"/>
                    <circle cx="652" cy="120" r="17" fill="#4a4c45"/>
                    <circle cx="653" cy="120" r="7" fill="#b2b2a7"/>
                    <!-- diagonal slots -->
                    <path fill="none" stroke-width="14" stroke-linecap="round" d="M658 153L683 202M684 148L711 196M709 143L738 190"/>
                    <path fill="none" stroke="#62645d" stroke-width="2" d="M668 153L691 197M694 148L719 192M719 143L744 186"/>
                    <g fill="#25271f"><circle cx="643" cy="260" r="9"/><circle cx="739" cy="242" r="9"/><circle cx="264" cy="285" r="6"/><circle cx="292" cy="281" r="6"/><circle cx="737" cy="150" r="4"/></g>
                    <circle cx="528" cy="292" r="6" fill="#aaa99e"/>
                    <path fill="none" stroke="#22231f" stroke-width="9" d="M134 307L157 303" stroke-dasharray="5 2"/>
                    <path fill="none" stroke="#282a25" stroke-width="6" stroke-dasharray="12 5 4 3" d="M165 302L236 291"/>
                    <path fill="none" stroke="#eee" stroke-width="3" d="M645 312L657 306M647 303L657 311M661 303L658 312M667 305L680 298M671 309L679 307"/>
                    <!-- orange front clamp -->
                    <path fill="#c9572e" d="M54 240L66 222 95 226 130 214 140 239 128 249 106 260 105 342 111 363 160 368 160 380 100 387 96 397 54 403 68 375V320L62 268Z"/>
                    <path fill="#8a3c22" d="M65 304L104 299V313L66 320Z"/>
                    <path fill="none" stroke-width="4" d="M76 252L100 247 107 255 76 263ZM60 279L106 270M61 375L98 367 159 378M69 325L104 318M68 232L80 240 132 225"/>
                    <circle cx="91" cy="348" r="12" fill="#96421f"/>
                    <circle cx="92" cy="349" r="6" fill="#30150c"/>
                    <circle cx="179" cy="369" r="14" fill="#1d1e1a"/>
                    <path fill="#8c4e23" d="M20 216L35 196 57 207 54 220 38 209 27 221Z"/>
                    <!-- forward lever -->
                    <path fill="#353730" d="M363 377L390 370 550 342 530 358 467 376V425L450 440 378 446 364 430Z"/>
                    <path fill="#4a4c44" d="M365 383L392 375 397 434 377 443 365 428Z"/>
                    <circle cx="420" cy="413" r="17" fill="#171815"/>
                    <circle cx="452" cy="414" r="5" fill="#aaa"/>
                    <path fill="#b64c2c" d="M401 450L421 444 438 460 439 498 426 503 402 487Z"/>
                    <path fill="none" stroke-width="7" d="M422 454V494"/>
                    <!-- trigger and guard -->
                    <path fill="none" stroke-width="12" d="M552 349L570 379 605 420 639 439 707 424 719 410 719 391"/>
                    <path fill="none" stroke="#484a43" stroke-width="4" d="M553 348L572 376 607 416 639 433 705 419 715 406"/>
                    <path fill="#5b5d54" d="M652 322L670 322 669 382 659 405 646 419 636 414 651 390Z"/>
                    <path fill="none" stroke-width="9" stroke-dasharray="5 3" d="M642 329Q665 360 657 387L642 417"/>
                </g>

                <!-- origin axes -->
                <g transform="translate(610 290) scale(.3333)" fill="none" stroke-width="6">
                    <path stroke="#21ef2b" d="M762 84V104M762 115V195M762 208V228M762 242V328"/>
                    <path stroke="#f01919" d="M601 276L635 289M646 294L664 301M676 306L750 335"/>
                    <path stroke="#1919ef" d="M775 338L858 325M870 321L890 317M902 315L980 300"/>
                    <circle cx="762" cy="340" r="13" fill="#eee" stroke="#bbb" stroke-width="2"/>
                </g>
            </svg>
        `;
    }
}
customElements.define('model-view', ModelView);

class CadCanvas extends HTMLElement {
    constructor() {
        super();
        this.attachShadow({ mode: 'open' });
        this.shadowRoot.innerHTML = `
            <style>
                :host {
                    position: relative; display: grid; grid-template: 1fr auto / 1fr auto 1fr;
                    padding: 4px 3px; background: #fff; min-height: 0;
                }
                model-view { position: absolute; inset: 0; }
                browser-tree, view-cube, panel-bar, nav-bar { position: relative; }
                browser-tree { grid-column: 1 / 3; }
                view-cube { justify-self: end; margin: 12px 6px 0 0; }
            </style>
            <model-view></model-view>
            <browser-tree></browser-tree>
            <view-cube></view-cube>
            <panel-bar>注释</panel-bar>
            <nav-bar></nav-bar>
        `;
    }
}
customElements.define('cad-canvas', CadCanvas);

const PURPLE = '#e292e6', PINK = '#ffaeb0', YELLOW = '#ffd777', ORANGE = '#ff9f66', RED = '#ff6372';

// colour of each run of features, and the features under it
const RUNS = [
    [PURPLE, 'sketch img ext sketch ext sketch ext sketch ext mv sketch ext sketch ext sketch ext sketch ext comb sketch dots'],
    [PINK, 'sketch ext'], [PURPLE, 'sketch body'], [PINK, 'ext'], ['#5a8cf0', 'comb comb'], [ORANGE, 'insert'],
    [ORANGE, 'sketch sketch ext ext mv'], [RED, 'mv comb'], ['#ba8cf2', 'sketch ext'], [RED, 'comb'],
    [PINK, 'sketch ext sketch ext'], [PURPLE, 'sketch', 'current'], [PINK, 'sketch'], [PURPLE, 'sketch ext mv'],
    [PINK, 'ext'], [PURPLE, 'sketch ext'], [PINK, 'cham'], [PURPLE, 'sketch ext sketch'], [YELLOW, 'ext'],
    [PURPLE, 'sketch'], [YELLOW, 'ext'], [PURPLE, 'sketch'], [YELLOW, 'ext sketch ext sketch ext cham mirror sketch ext'],
    [PINK, 'sketch ext mirror'], [PURPLE, 'sketch']
];

class TimeLine extends HTMLElement {
    constructor() {
        super();
        this.attachShadow({ mode: 'open' });
        const runs = RUNS.map(([colour, list, state = '']) => `
            <div class="run ${state}">
                <i style="background: ${colour}"></i>
                <div class="steps">${list.split(' ').map(n => `<button aria-label="${n}" class="${n}">${icon(n, 13)}</button>`).join('')}</div>
            </div>`).join('');
        this.shadowRoot.innerHTML = `
            <style>
                ${BASE}
                :host { position: relative; display: flex; height: 34px; background: #f0f0f0; border-top: 1px solid #c8cbc8; overflow: hidden; }
                .handle { position: absolute; top: 1px; left: 3px; width: 4px; height: 4px; background: #ccc; }
                .play { display: flex; align-items: center; width: 117px; padding: 14px 0 0 3px; }
                .play button { width: 21px; }
                .track { flex: 1; display: flex; overflow: hidden; padding: 5px 0 0 1px; }
                .run { flex: none; }
                .run i { display: block; height: 5px; margin: 0 1px 0 2px; }
                .steps { display: flex; }
                .steps button { position: relative; width: 20px; height: 19px; }
                .steps button::after { content: ""; position: absolute; bottom: -4px; left: 10px; width: 1px; height: 4px; background: #aaa; }
                .current button { background: #d4d4d4; }
                .steps .dots::after { left: 6px; width: 7px; height: 5px; border-radius: 3px 3px 0 0; background: #333f55; }
                .set { width: 36px; padding-top: 14px; }
            </style>
            <span class="handle"></span>
            <div class="play">
                ${['first', 'prev', 'play', 'next', 'last'].map(n => `<button aria-label="${n}">${icon(n, 12)}</button>`).join('')}
            </div>
            <div class="track">${runs}</div>
            <button class="set" aria-label="设置">${icon('gear', 14)}</button>
        `;
    }
}
customElements.define('time-line', TimeLine);

class CadApp extends HTMLElement {
    constructor() {
        super();
        this.attachShadow({ mode: 'open' });
        this.shadowRoot.innerHTML = `
            <style>
                :host { display: grid; grid-template-columns: 7px 1fr 7px; height: 100vh; }
                .left { display: flex; align-items: flex-end; background: #282828; color: #aaa; border-right: 1px solid #777; }
                .right { background: linear-gradient(#222 14px, #747474 14px calc(100% - 17px), #2c2c2c 0); border-left: 1px solid #555; }
                main { display: grid; grid-template-rows: auto auto 1fr auto; min-width: 0; }
            </style>
            <div class="left">z</div>
            <main>
                <title-bar></title-bar>
                <tool-ribbon></tool-ribbon>
                <cad-canvas></cad-canvas>
                <time-line></time-line>
            </main>
            <div class="right"></div>
        `;
    }
}
customElements.define('cad-app', CadApp);
</script>
</body>
</html>
